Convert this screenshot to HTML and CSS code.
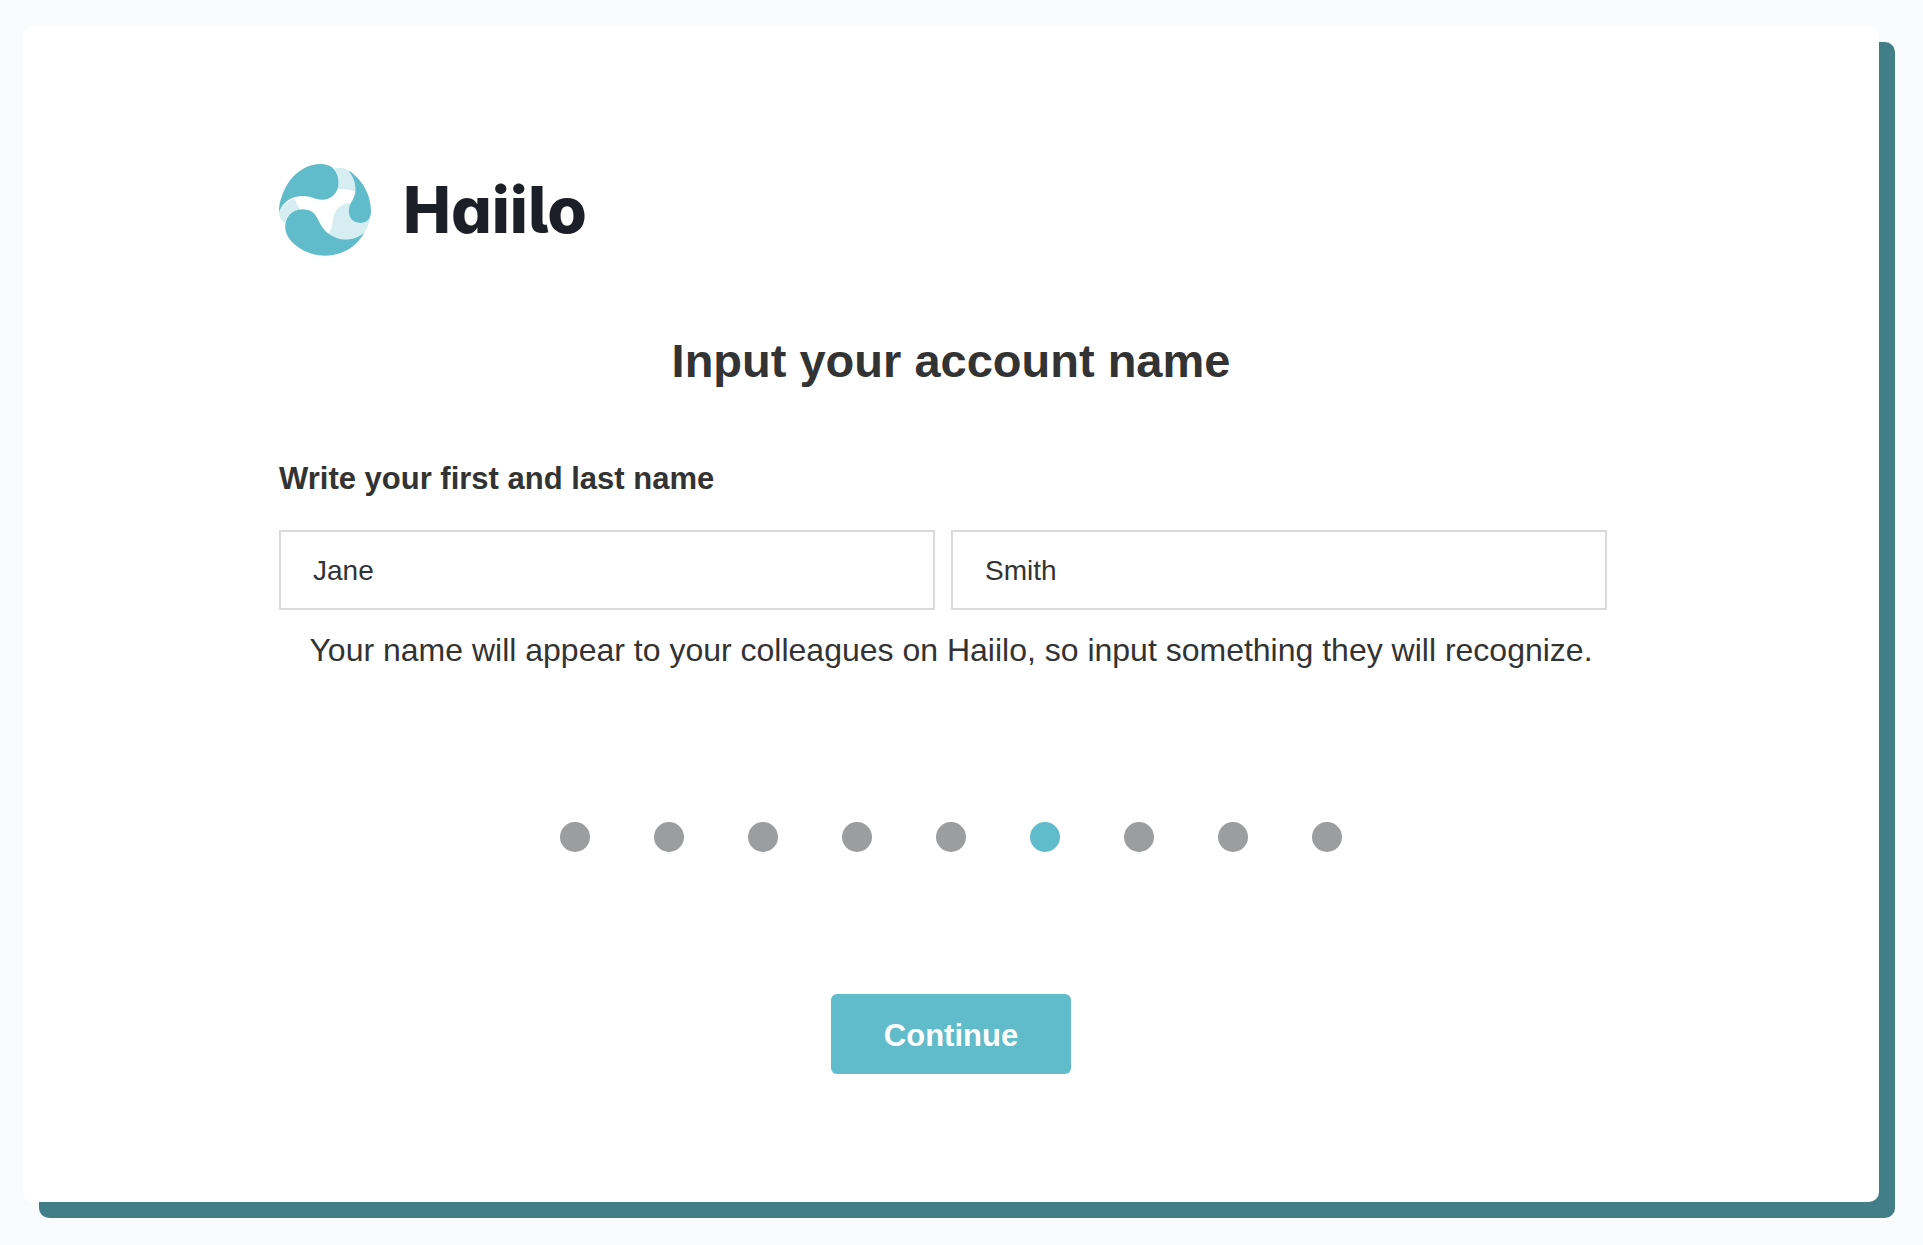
FILE: index.html
```html
<!DOCTYPE html>
<html lang="en">

<head>
    <meta charset="UTF-8">
    <meta name="viewport" content="width=device-width, initial-scale=1.0">
    <title>Haiilo</title>
    <link rel="stylesheet" href="styles.css">
</head>

<body>
    <main class="card">
        <div class="logo">
            <svg class="logo-mark" viewBox="42 41 278 278" aria-hidden="true">
                <g fill="#d6eef2">
                    <path d="M42 186C52 165 68 152 88 146L105 178C80 182 62 198 62 221C50 213 42 205 42 186Z" />
                    <path d="M192 251C203 235 203 222 205 207C208 180 230 158 264 158C250 180 252 219 288 219C303 219 311 210 317 203C314 222 306 240 298 252C265 275 222 275 192 251Z" />
                    <path d="M208 54C225 50 242 52 253 61C266 78 273 98 273 124C255 117 238 116 217 118C226 100 224 74 208 54Z" />
                </g>
                <g fill="#60bbcb">
                    <path d="M42 186C42 130 85 41 170 41C205 41 222 68 222 97C222 130 198 149 172 149C150 149 140 138 115 138C80 138 55 155 42 186Z" />
                    <path d="M61 236C59 203 80 178 112 178C165 178 155 225 190 250C225 277 270 274 300 249C275 292 235 318 181 318C125 318 65 280 61 236Z" />
                    <path d="M252 61C290 85 320 130 320 185C320 208 304 219 288 219C265 219 253 203 253 184C253 155 273 150 273 118C273 92 262 75 252 61Z" />
                </g>
            </svg>
            <span class="logo-text">Haiilo</span>
        </div>
        <h1>Input your account name</h1>
        <form class="name-form">
            <label class="form-label" for="first-name">Write your first and last name</label>
            <div class="fields">
                <input type="text" id="first-name" value="Jane">
                <input type="text" id="last-name" value="Smith" aria-label="Last name">
            </div>
            <p class="hint">Your name will appear to your colleagues on Haiilo, so input something they will recognize.</p>
            <ul class="steps">
                <li></li>
                <li></li>
                <li></li>
                <li></li>
                <li></li>
                <li class="active"></li>
                <li></li>
                <li></li>
                <li></li>
            </ul>
            <button type="submit" class="continue">Continue</button>
        </form>
    </main>
</body>

</html>
```

FILE: styles.css
```css
* {
    box-sizing: border-box;
}

body {
    margin: 0;
    padding: 26px 44px 43px 23px;
    background: #fafbfd;
    color: #333;
    font-family: "Liberation Sans", Arial, sans-serif;
}

.card {
    padding: 138px 256px 128px;
    background: #fff;
    border-radius: 10px;
    box-shadow: 16px 16px 0 #427e88;
}

.logo {
    display: flex;
    align-items: center;
    gap: 32px;
    height: 92px;
}

.logo-mark {
    width: 92px;
    height: 92px;
}

.logo-text {
    color: #1d1f28;
    font-family: Inter, sans-serif;
    font-size: 64px;
    font-weight: 800;
    line-height: 92px;
    font-feature-settings: "cv11", "cv05";
}

h1 {
    margin: 77px 0 68px;
    font-size: 47px;
    line-height: 56px;
    text-align: center;
}

.name-form {
    display: flex;
    flex-direction: column;
}

.form-label {
    font-size: 31px;
    font-weight: 700;
    line-height: 44px;
}

.fields {
    display: flex;
    gap: 16px;
    margin: 29px 16px 20px 0;
}

.fields input {
    flex: 1;
    min-width: 0;
    height: 80px;
    padding: 2px 32px 0;
    border: 2px solid #d9dade;
    background: #fff;
    color: #333;
    font-family: inherit;
    font-size: 28px;
}

.hint {
    margin: 0;
    font-size: 32px;
    line-height: 40px;
    text-align: center;
}

.steps {
    display: flex;
    justify-content: center;
    gap: 64px;
    margin: 152px 0 142px;
    padding: 0;
    list-style: none;
}

.steps li {
    width: 30px;
    height: 30px;
    border-radius: 50%;
    background: #9c9d9f;
}

.steps li.active {
    background: #60bbcb;
}

.continue {
    align-self: center;
    width: 240px;
    height: 80px;
    padding: 4px 0 0;
    border: none;
    border-radius: 6px;
    background: #60bbcb;
    color: #fff;
    font-family: inherit;
    font-size: 31px;
    font-weight: 700;
    cursor: pointer;
}
```
